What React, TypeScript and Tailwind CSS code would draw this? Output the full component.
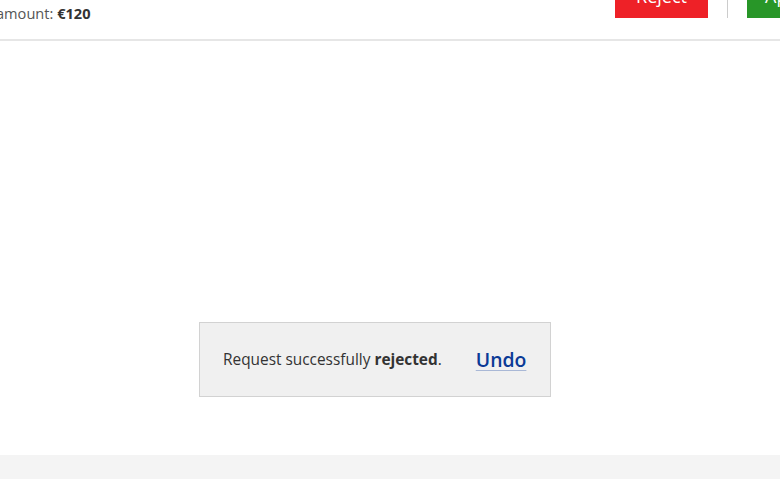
export default function App() {
  return (
    <div className="h-[479px] overflow-hidden bg-white flex flex-col" style={{ fontFamily: '"Open Sans", sans-serif' }}>
      <header className="h-[41px] border-b-2 border-[#e6e6e6] flex justify-between items-start shrink-0">
        <p className="-ml-[4px] mt-[2px] text-[14.6px] leading-[22px] text-[#555]">
          amount: <strong className="font-bold text-[#333]">€120</strong>
        </p>
        <div className="flex items-start -mr-[40px]">
          <button className="w-[93px] h-[44px] -mt-[26px] bg-[#ee2127] text-white text-[18px] leading-[44px]">
            Reject
          </button>
          <div className="w-px h-[18px] bg-[#cccccc] mx-[19px]"></div>
          <button className="w-[73px] h-[44px] -mt-[26px] bg-[#289628] text-white text-[18px] leading-[44px] text-left pl-[18px]">
            Approve
          </button>
        </div>
      </header>

      <main className="flex-1 bg-white">
        <div className="ml-[199px] mt-[281px] w-[352px] h-[75px] bg-[#f0f0f0] border border-[#d2d2d2] flex items-center pl-[23px]">
          <p className="text-[15.4px] text-[#333]">
            Request successfully <strong className="font-bold">rejected</strong>.
          </p>
          <a
            href="#"
            className="ml-[34px] text-[19.4px] font-semibold text-[#0b3a96] underline decoration-[#a9b8d6] underline-offset-[3px]"
          >
            Undo
          </a>
        </div>
      </main>

      <footer className="h-[24px] bg-[#f4f4f4] shrink-0"></footer>
    </div>
  );
}
